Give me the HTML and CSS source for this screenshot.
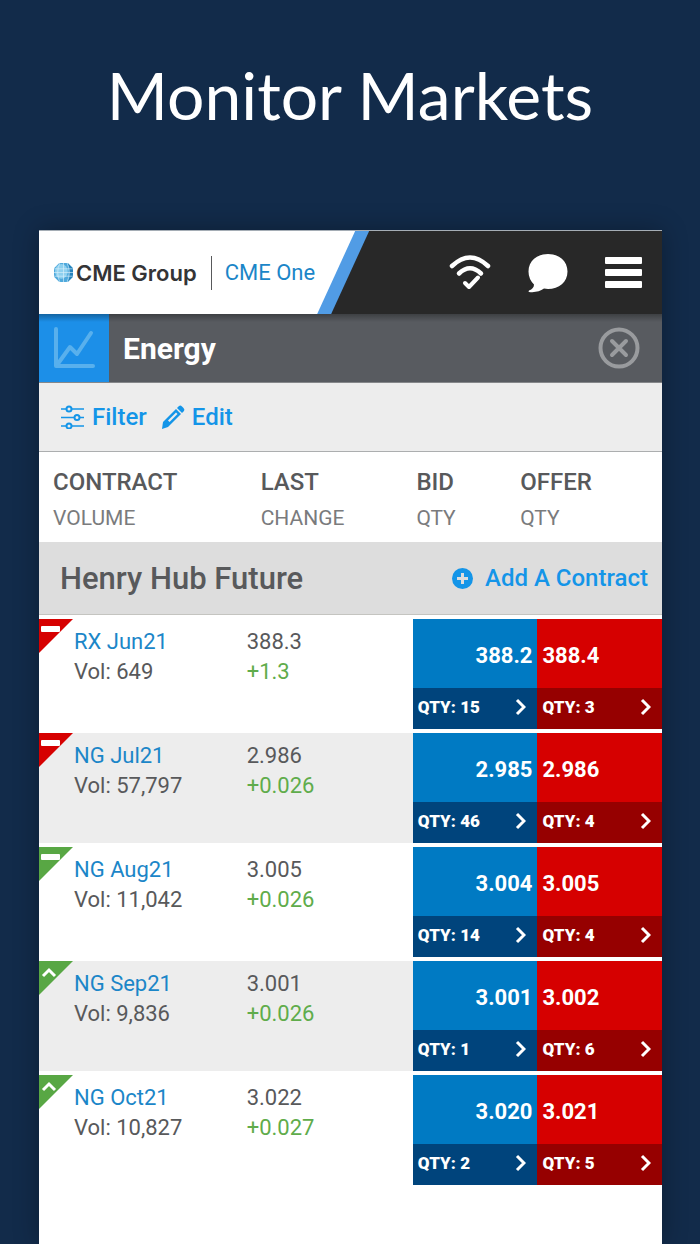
FILE: index.html
```html
<!DOCTYPE html>
<html lang="en">
<head>
    <meta charset="UTF-8">
    <meta name="viewport" content="width=device-width, initial-scale=1.0">
    <title>Monitor Markets</title>
    <link rel="stylesheet" href="styles.css">
</head>
<body>
    <h1 class="headline">Monitor Markets</h1>

    <main class="app">
        <!-- Top bar -->
        <header class="top-bar">
            <div class="brand-edge">
                <div class="brand">
                    <svg class="globe" viewBox="1 1 18 18" aria-hidden="true">
                        <path d="M6 1h8l5 5v8l-5 5H6l-5-5V6z" fill="#4fa9dc"/>
                        <ellipse cx="8" cy="9" rx="6" ry="7" fill="#8ed0ef"/>
                        <path d="M14 1l5 5v8l-5 5q3-9 0-18z" fill="#2583bd"/>
                        <path d="M1 6.500h18M1 10h18M1 13.500h18M10 1v18M6.500 1q-4 9 0 18M13.500 1q4 9 0 18" fill="none" stroke="#d9effa" stroke-width=".6"/>
                    </svg>
                    <span class="brand-name">CME Group</span>
                    <a class="product" href="#">CME One</a>
                </div>
            </div>
            <nav class="top-icons">
                <button type="button" class="icon-btn" aria-label="Connection">
                    <svg width="42" height="36" viewBox="0 0 42 36" fill="none" stroke="#fff" stroke-width="4.500" stroke-linecap="round" stroke-linejoin="round">
                        <path d="M3 11Q21-6 39 11"/>
                        <path d="M10 18.500Q21 8 32 18.500"/>
                        <path d="M16 28l4 4 9-9.500" stroke-width="4"/>
                    </svg>
                </button>
                <button type="button" class="icon-btn" aria-label="Messages">
                    <svg width="40" height="40" viewBox="0 0 40 40" fill="#fff">
                        <path d="M20 1C31 1 39.500 8 39.500 18.500S31 36 20 36q-2 0-4-.4Q10 40 1 39q-1-.5 0-1.500 5-2 5-6Q.5 26 .5 18.500C.5 8 9 1 20 1z"/>
                    </svg>
                </button>
                <button type="button" class="icon-btn" aria-label="Menu">
                    <svg width="37" height="32" viewBox="0 0 37 32" fill="#fff">
                        <rect width="37" height="7" rx="1"/>
                        <rect y="12" width="37" height="7" rx="1"/>
                        <rect y="24" width="37" height="7" rx="1"/>
                    </svg>
                </button>
            </nav>
        </header>

        <!-- View title -->
        <div class="title-bar">
            <div class="chart-tile">
                <svg width="42" height="42" viewBox="0 0 42 42" fill="none" stroke="#58b0ed" stroke-width="4" stroke-linecap="round" stroke-linejoin="round" aria-hidden="true">
                    <path d="M3 2v37h37"/>
                    <path d="M4 38l13-18 7 7L38 6"/>
                </svg>
            </div>
            <h2>Energy</h2>
            <button type="button" class="icon-btn" aria-label="Close">
                <svg width="42" height="42" viewBox="0 0 42 42" fill="none" stroke="#999b9e" stroke-width="4" stroke-linecap="round">
                    <circle cx="21" cy="21" r="18.500"/>
                    <path d="M14 14l14 14M28 14L14 28"/>
                </svg>
            </button>
        </div>

        <!-- Actions -->
        <div class="toolbar">
            <button type="button" class="action">
                <svg width="24" height="24" viewBox="0 0 24 24" fill="none" stroke="#1495e8" stroke-width="2" aria-hidden="true">
                    <path d="M0 4h5M11 4h12M0 12.500h13M19 12.500h4M0 21h5M11 21h12" stroke-width="1.500"/>
                    <circle cx="8" cy="4" r="2.500"/>
                    <circle cx="16" cy="12.500" r="2.500"/>
                    <circle cx="8" cy="21" r="2.500"/>
                </svg>
                Filter
            </button>
            <button type="button" class="action">
                <svg width="24" height="24" viewBox="0 0 24 24" aria-hidden="true">
                    <path d="M2 17L15 4l5 5L7 22l-6 2z" fill="#1495e8"/>
                    <path d="M16 3l2-2q1.500-1 3 .5l1.500 1.500q1.500 1.500.5 3l-2 2z" fill="#1495e8"/>
                    <path d="M7 15.500L15 7.500l1.500 1.500-8 8z" fill="#ededed"/>
                </svg>
                Edit
            </button>
        </div>

        <!-- Quotes -->
        <table class="quotes">
            <thead>
                <tr>
                    <th scope="col">CONTRACT <span>VOLUME</span></th>
                    <th scope="col">LAST <span>CHANGE</span></th>
                    <th scope="col">BID <span>QTY</span></th>
                    <th scope="col">OFFER <span>QTY</span></th>
                </tr>
            </thead>
            <tbody id="quote-rows">
                <tr class="group">
                    <th colspan="3" scope="colgroup">Henry Hub Future</th>
                    <td>
                        <button type="button" class="action add">
                            <svg width="21" height="21" viewBox="0 0 21 21" aria-hidden="true">
                                <circle cx="10.500" cy="10.500" r="10.500" fill="#1495e8"/>
                                <path d="M10.500 5v11M5 10.500h11" stroke="#ddd" stroke-width="3"/>
                            </svg>
                            Add A Contract
                        </button>
                    </td>
                </tr>
            </tbody>
        </table>
    </main>

    <script>
        const quoteRows = document.getElementById('quote-rows');

        const quotes = [
            { name: "RX Jun21", vol: "649", last: "388.3", change: "+1.3", bid: "388.2", bidQty: 15, offer: "388.4", offerQty: 3, color: "red", mark: "flat" },
            { name: "NG Jul21", vol: "57,797", last: "2.986", change: "+0.026", bid: "2.985", bidQty: 46, offer: "2.986", offerQty: 4, color: "red", mark: "flat" },
            { name: "NG Aug21", vol: "11,042", last: "3.005", change: "+0.026", bid: "3.004", bidQty: 14, offer: "3.005", offerQty: 4, color: "green", mark: "flat" },
            { name: "NG Sep21", vol: "9,836", last: "3.001", change: "+0.026", bid: "3.001", bidQty: 1, offer: "3.002", offerQty: 6, color: "green", mark: "up" },
            { name: "NG Oct21", vol: "10,827", last: "3.022", change: "+0.027", bid: "3.020", bidQty: 2, offer: "3.021", offerQty: 5, color: "green", mark: "up" }
        ];

        const marks = {
            flat: '<rect x="2" y="7" width="19" height="6" rx="1" fill="#fff"/>',
            up: '<path d="M4 15l6-6 6 6" fill="none" stroke="#fff" stroke-width="3"/>'
        };

        // Bid or offer button
        function priceButton(side, price, qty) {
            return `
                <button type="button" class="price ${side}">
                    <span class="price-value">${price}</span>
                    <span class="price-qty">QTY: ${qty}
                        <svg width="11" height="18" viewBox="0 0 11 18" fill="none" stroke="#fff" stroke-width="3"><path d="M2 2l7 7-7 7"/></svg>
                    </span>
                </button>
            `;
        }

        quotes.forEach(quote => {
            const tr = document.createElement('tr');
            tr.classList.add('quote');
            tr.innerHTML = `
                <td class="contract">
                    <svg class="flag ${quote.color}" viewBox="0 0 34 34"><path d="M0 0h34L0 34z"/>${marks[quote.mark]}</svg>
                    <a href="#">${quote.name}</a>
                    <div>Vol: ${quote.vol}</div>
                </td>
                <td class="last">
                    <div>${quote.last}</div>
                    <div class="change">${quote.change}</div>
                </td>
                <td>${priceButton('bid', quote.bid, quote.bidQty)}</td>
                <td>${priceButton('offer', quote.offer, quote.offerQty)}</td>
            `;
            quoteRows.appendChild(tr);
        });
    </script>
</body>
</html>
```
FILE: styles.css
```css
/* General Styling */
* {
    box-sizing: border-box;
}
body {
    margin: 0;
    min-height: 100vh;
    display: flex;
    flex-direction: column;
    font-family: Roboto, sans-serif;
    background-color: #122b4a;
    color: #58595b;
}
h1, h2 {
    margin: 0;
}
a {
    color: #1b86c8;
    text-decoration: none;
}
button {
    border: none;
    padding: 0;
    background: none;
    font-family: inherit;
    cursor: pointer;
}
svg {
    display: block;
    flex-shrink: 0;
}
.headline {
    padding: 55px 20px 95px;
    font-family: Lato, sans-serif;
    font-size: 66px;
    font-weight: 400;
    line-height: 80px;
    text-align: center;
    color: white;
}
.app {
    flex: 1;
    margin: 0 38px 0 39px;
    background-color: white;
    box-shadow: 0 0 24px rgba(0, 0, 0, 0.3);
}

/* Top bar */
.top-bar {
    display: flex;
    justify-content: space-between;
    height: 84px;
    border-top: 1px solid #a5adb5;
    background-color: #282828;
}
.brand-edge {
    padding-right: 14px;
    background-color: #519ce5;
    clip-path: polygon(0 0, 100% 0, calc(100% - 38px) 100%, 0 100%);
}
.brand {
    display: flex;
    align-items: center;
    height: 100%;
    padding: 0 40px 0 15px;
    background-color: white;
    clip-path: polygon(0 0, 100% 0, calc(100% - 38px) 100%, 0 100%);
}
.globe {
    width: 19px;
    height: 19px;
    margin-right: 3px;
}
.brand-name {
    padding-right: 14px;
    font-family: Inter, sans-serif;
    font-size: 22px;
    font-weight: 600;
    color: #343436;
}
.product {
    padding-left: 13px;
    border-left: 1px solid #58595b;
    font-size: 22px;
    line-height: 34px;
}
.top-icons {
    display: flex;
    align-items: center;
    gap: 37px;
    padding-right: 20px;
}

/* View title */
.title-bar {
    display: flex;
    align-items: center;
    height: 69px;
    padding-right: 22px;
    border-bottom: 1px solid #85878a;
    background: linear-gradient(rgba(0, 0, 0, 0.3), transparent 8px) #585b60;
}
.chart-tile {
    display: flex;
    align-items: center;
    justify-content: center;
    width: 70px;
    height: 100%;
    background: linear-gradient(rgba(0, 0, 0, 0.3), transparent 8px) #1c8fe8;
}
.title-bar h2 {
    flex: 1;
    padding-left: 14px;
    font-size: 30px;
    font-weight: 700;
    color: white;
}

/* Actions */
.toolbar {
    display: flex;
    align-items: center;
    gap: 14px;
    height: 69px;
    padding: 0 22px;
    border-bottom: 1px solid #acaeaf;
    background-color: #ededed;
}
.action {
    display: flex;
    align-items: center;
    gap: 7px;
    font-size: 24px;
    font-weight: 500;
    color: #1495e8;
}
.add {
    gap: 12px;
}

/* Quotes */
.quotes, .quotes thead, .quotes tbody {
    display: block;
}
.quotes tr {
    display: grid;
}
.quotes th, .quotes td {
    padding: 0;
    text-align: left;
}
.quotes thead tr {
    grid-template-columns: 4fr 3fr 2fr 3fr;
    padding: 12px 0 6px;
}
.quotes thead th {
    padding-left: 14px;
    font-size: 24px;
    font-weight: 500;
    line-height: 36px;
}
.quotes thead span {
    display: block;
    font-size: 21px;
    font-weight: 400;
    color: #7a7b7d;
}
.quotes .group {
    grid-template-columns: 1fr auto;
    align-items: center;
    height: 73px;
    padding: 0 14px 0 21px;
    border-bottom: 1px solid #c4c4c0;
    background-color: #ddd;
}
.group th {
    font-size: 31px;
    font-weight: 500;
}
.quotes .quote {
    grid-template-columns: 5fr 4fr 3fr 3fr;
    margin-top: 4px;
    font-size: 22px;
    line-height: 30px;
}
.quote:nth-child(odd) {
    background-color: #ededed;
}
.quote .contract {
    position: relative;
    padding: 8px 0 0 35px;
}
.quote .last {
    padding-top: 8px;
}
.contract a {
    display: block;
}
.change {
    color: #5fac4b;
}
/* Corner flag showing the last tick */
.flag {
    position: absolute;
    top: 0;
    left: 0;
    width: 34px;
    height: 34px;
}
.flag.red {
    fill: #d60000;
}
.flag.green {
    fill: #58a744;
}
.price {
    display: block;
    width: 100%;
    color: white;
    font-weight: 700;
}
.price-value {
    display: block;
    padding: 4px 5px 0;
    font-size: 22px;
    line-height: 65px;
    text-align: left;
}
.bid .price-value {
    text-align: right;
}
.price-qty {
    display: flex;
    align-items: center;
    justify-content: space-between;
    height: 41px;
    padding: 0 11px 3px 5px;
    font-size: 17px;
    font-weight: 900;
}
.bid {
    background-color: #007ac3;
}
.bid .price-qty {
    background-color: #00447c;
}
.offer {
    background-color: #d60000;
}
.offer .price-qty {
    background-color: #960000;
}
```
